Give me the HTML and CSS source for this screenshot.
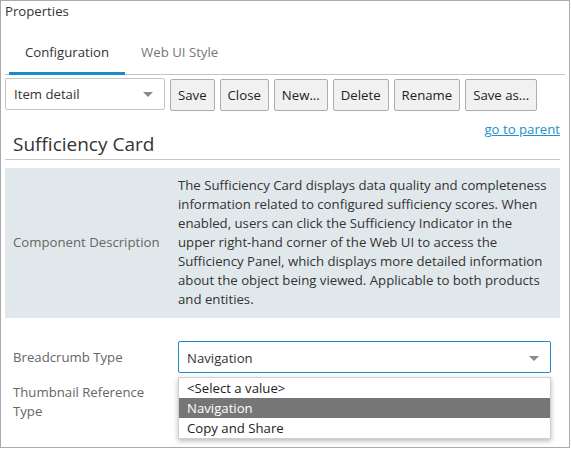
FILE: index.html
```html
<!DOCTYPE html>
<html>
<head>
<meta charset="utf-8">
<link rel="stylesheet" href="styles.css">
</head>
<body>
<div class="panel">
  <div class="panel-title">Properties</div>
  <div class="tabs">
    <div class="tab active">Configuration</div>
    <div class="tab">Web UI Style</div>
  </div>
  <div class="content">
    <div class="toolbar">
      <div class="select">
        <span>Item detail</span>
        <span class="caret"></span>
      </div>
      <button class="btn">Save</button>
      <button class="btn">Close</button>
      <button class="btn">New...</button>
      <button class="btn">Delete</button>
      <button class="btn">Rename</button>
      <button class="btn">Save as...</button>
    </div>
    <div class="heading-row">
      <h1 class="heading">Sufficiency Card</h1>
      <a class="parent-link" href="#">go to parent</a>
    </div>
    <div class="desc">
      <div class="label">Component Description</div>
      <div class="desc-text">The Sufficiency Card displays data quality and completeness information related to configured sufficiency scores. When enabled, users can click the Sufficiency Indicator in the upper right-hand corner of the Web UI to access the Sufficiency Panel, which displays more detailed information about the object being viewed. Applicable to both products and entities.</div>
    </div>
    <div class="field">
      <div class="label">Breadcrumb Type</div>
      <div class="value">
        <div class="input">
          <span>Navigation</span>
          <span class="caret"></span>
        </div>
        <ul class="menu">
          <li>&lt;Select a value&gt;</li>
          <li class="selected">Navigation</li>
          <li>Copy and Share</li>
        </ul>
      </div>
    </div>
    <div class="field field-2">
      <div class="label">Thumbnail Reference Type</div>
      <div class="value"></div>
    </div>
  </div>
</div>
</body>
</html>
```
FILE: styles.css
```css
html, body {
  margin: 0;
  padding: 0;
  background: #ffffff;
}
body {
  font-family: "Open Sans", "Noto Sans", sans-serif;
  font-size: 13.2px;
  color: #333333;
}
.panel {
  box-sizing: border-box;
  width: 570px;
  height: 448px;
  border: 1px solid #a9a9a9;
  overflow: hidden;
}
.panel-title {
  height: 20px;
  line-height: 20px;
  padding-left: 4px;
  color: #333;
}
.tabs {
  display: flex;
  margin: 0 4px;
  padding-left: 4px;
  height: 53px;
  border-bottom: 1px solid #c4c4c4;
  align-items: stretch;
}
.tab {
  padding: 0 16px;
  display: flex;
  align-items: center;
  padding-top: 10px;
  color: #767676;
  border-bottom: 3px solid transparent;
  margin-bottom: -1px;
}
.tab.active {
  color: #333;
  border-bottom-color: #1a8acb;
}
.content {
  padding: 0 9px 0 4px;
  position: relative;
}
.toolbar {
  display: flex;
  gap: 5px;
  margin-top: 3px;
  height: 32px;
  align-items: flex-start;
}
.select {
  box-sizing: border-box;
  width: 160px;
  height: 32px;
  border: 1px solid #c6c6c6;
  border-radius: 2px;
  display: flex;
  align-items: center;
  justify-content: space-between;
  padding: 0 11px 0 8px;
}
.caret {
  width: 0;
  height: 0;
  border-left: 5px solid transparent;
  border-right: 5px solid transparent;
  border-top: 5px solid #8a8a8a;
}
.btn {
  box-sizing: border-box;
  height: 32px;
  margin-top: 1px;
  padding: 0 7px;
  font: inherit;
  color: #222;
  background: #f1f1f1;
  border: 1px solid #adadad;
  border-radius: 2px;
}
.heading-row {
  display: flex;
  justify-content: space-between;
  align-items: flex-start;
  height: 49px;
  border-bottom: 1px solid #c4c4c4;
}
.heading {
  margin: 22px 0 0 8px;
  font-size: 19px;
  font-weight: normal;
  color: #333;
  line-height: 24px;
}
.parent-link {
  margin-top: 10px;
  color: #2291cf;
  text-decoration: underline;
}
.desc {
  display: flex;
  align-items: center;
  margin-top: 8px;
  background: #e1e8eb;
  padding: 8px 0 9px;
}
.label {
  box-sizing: border-box;
  width: 173px;
  padding: 0 18px 0 8px;
  color: #666;
  line-height: 19px;
}
.desc-text {
  flex: 1;
  line-height: 19px;
  padding-right: 8px;
}
.field {
  display: flex;
  align-items: center;
  margin-top: 23px;
}
.field-2 {
  margin-top: 10px;
  align-items: flex-start;
}
.value {
  position: relative;
  width: 373px;
}
.input {
  box-sizing: border-box;
  height: 32px;
  border: 1px solid #1a8acb;
  border-radius: 2px;
  display: flex;
  align-items: center;
  justify-content: space-between;
  padding: 2px 11px 0 8px;
}
.menu {
  position: absolute;
  left: 0;
  top: 36px;
  width: 373px;
  box-sizing: border-box;
  margin: 0;
  padding: 0;
  list-style: none;
  background: #fff;
  border: 1px solid #d0d0d0;
  box-shadow: 0 2px 5px rgba(0, 0, 0, 0.28);
  z-index: 2;
}
.menu li {
  height: 20px;
  line-height: 20px;
  padding-left: 8px;
  color: #222;
}
.menu li.selected {
  background: #767676;
  color: #fff;
}
```
